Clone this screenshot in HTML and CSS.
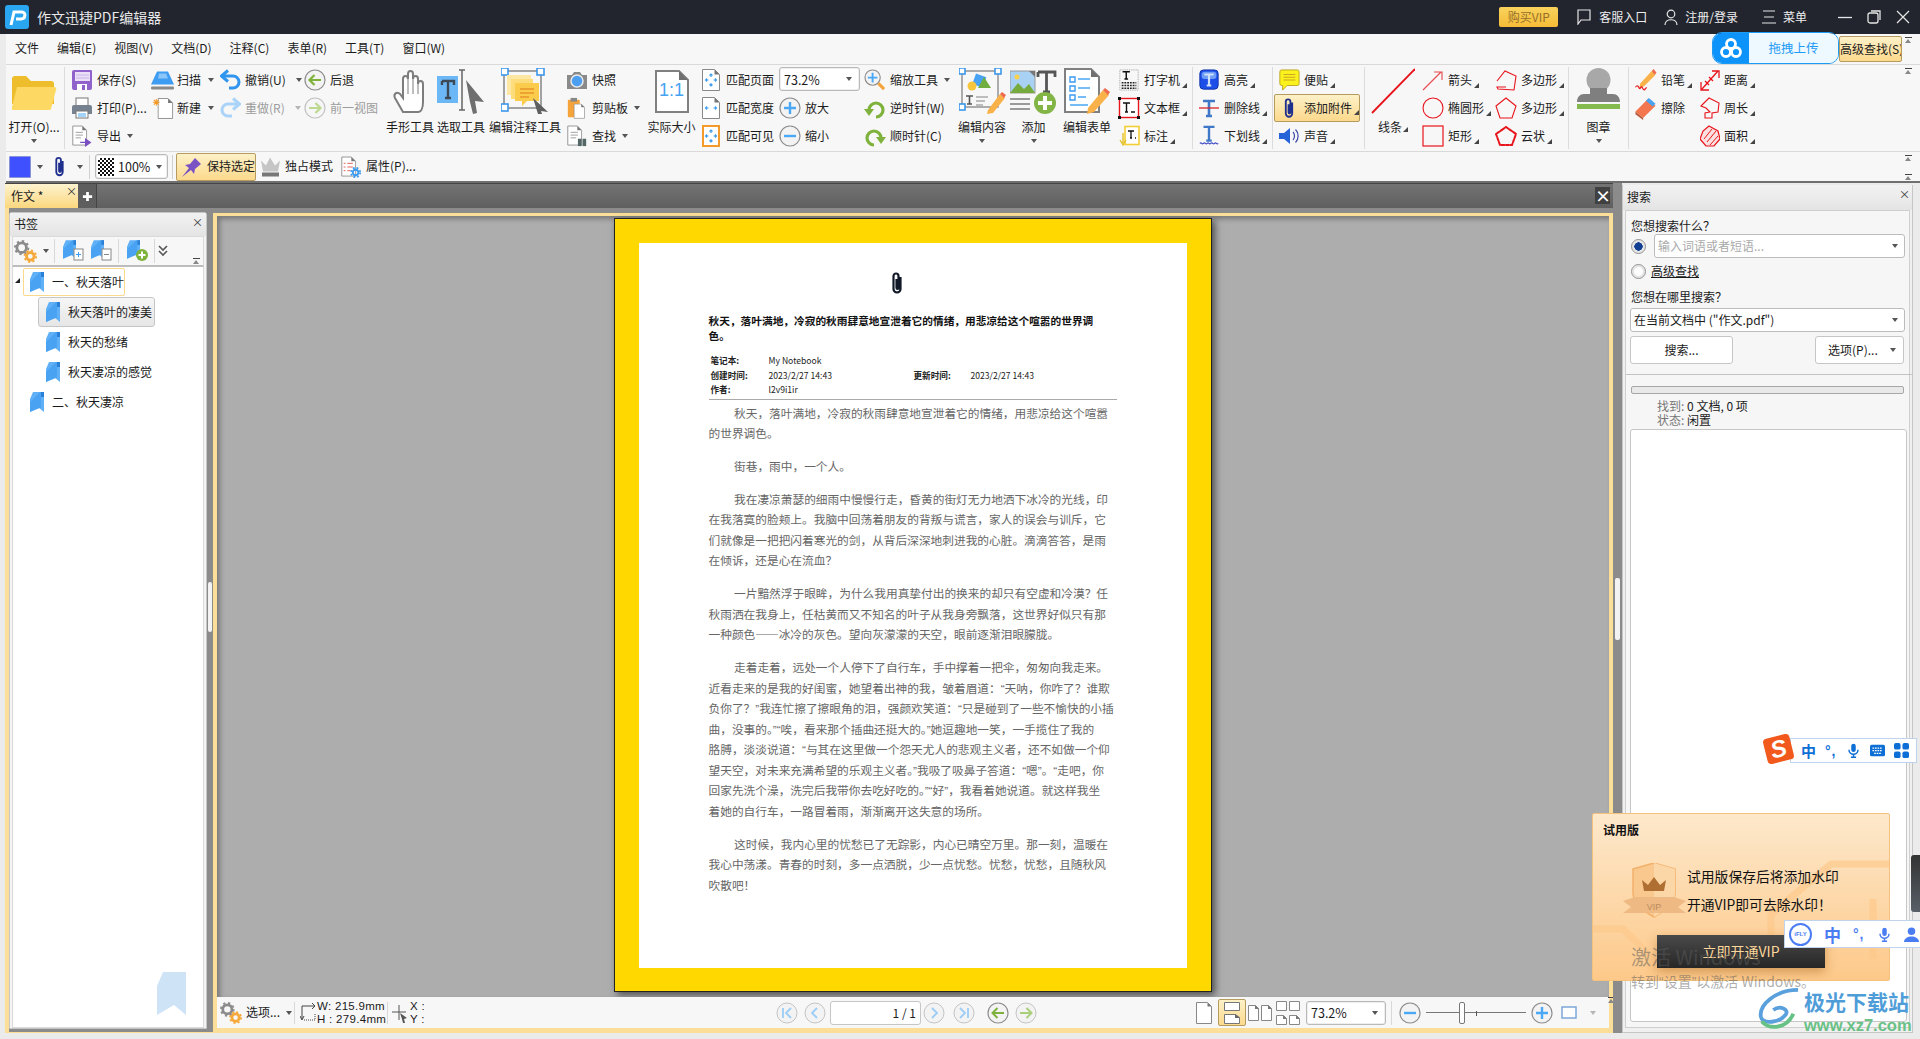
FILE: index.html
```html
<!DOCTYPE html>
<html lang="zh-CN">
<head>
<meta charset="utf-8">
<title>作文迅捷PDF编辑器</title>
<link rel="stylesheet" href="styles.css">
</head>
<body>
<svg class="defs" aria-hidden="true">
<symbol id="gear" viewBox="0 0 24 24"><circle cx="8" cy="8" r="5" fill="none" stroke="#8b8b8b" stroke-width="3"/><circle cx="8" cy="8" r="7" fill="none" stroke="#8b8b8b" stroke-width="2" stroke-dasharray="2.4 3.1"/><circle cx="17" cy="17" r="4" fill="none" stroke="#f5a93c" stroke-width="3"/><circle cx="17" cy="17" r="6" fill="none" stroke="#f5a93c" stroke-width="2" stroke-dasharray="2.2 2.5"/></symbol>
<symbol id="bm" viewBox="0 0 14 20"><path d="M3 0H14V20L8.500 15.500 0 20V7Z" fill="#5fb0f6"/><path d="M11 0h3v5h-3z" fill="#2a7fd6"/><path d="M0 20V10L10 0h1V15.500Z" fill="#4aa3f2"/></symbol>
<symbol id="clip" viewBox="0 0 12 24"><path d="M9.500 6v12a3.500 3.500 0 0 1-7 0V5a2.500 2.500 0 0 1 5 0v12a1 1 0 0 1-2 0V8" fill="none" stroke="#1e2f8e" stroke-width="2"/></symbol>
<symbol id="doc" viewBox="0 0 18 24"><path d="M1 1h11l5 5v17H1Z" fill="#fff" stroke="#8a8a8a"/><path d="M12 1v5h5Z" fill="#777"/></symbol>
<symbol id="mic" viewBox="0 0 16 20"><rect x="5" y="1" width="6" height="11" rx="3" fill="currentColor"/><path d="M2 9a6 6 0 0 0 12 0M8 15v4M4.500 19h7" fill="none" stroke="currentColor" stroke-width="2"/></symbol>
<symbol id="round" viewBox="0 0 22 22"><circle cx="11" cy="11" r="10" fill="#f3f3f3" stroke="#8d8d8d" stroke-width="1.200"/></symbol>
<symbol id="plus" viewBox="0 0 22 22"><circle cx="11" cy="11" r="10" fill="#f3f3f3" stroke="#8d8d8d" stroke-width="1.200"/><path d="M11 5v12M5 11h12" stroke="#4aa8f5" stroke-width="2.400"/></symbol>
<symbol id="minus" viewBox="0 0 22 22"><circle cx="11" cy="11" r="10" fill="#f3f3f3" stroke="#8d8d8d" stroke-width="1.200"/><path d="M5 11h12" stroke="#4aa8f5" stroke-width="2.400"/></symbol>
</svg>

<header class="titlebar">
  <svg class="logo" viewBox="0 0 24 24"><rect width="24" height="24" rx="3" fill="#2aa5f0"/><path d="M6 20 9 7h8c4 0 4 7-1 7h-5" fill="none" stroke="#fff" stroke-width="3"/></svg>
  <span class="apptitle">作文迅捷PDF编辑器</span>
  <span class="vip">购买VIP</span>
  <svg class="tb-ic a1" viewBox="0 0 14 16"><path d="M1 1h12v10H4l-3 4Z" fill="none" stroke="#e6e6e6" stroke-width="1.200"/></svg><span class="tb-t t1">客服入口</span>
  <svg class="tb-ic a2" viewBox="0 0 14 16"><circle cx="7" cy="5" r="3.800" fill="none" stroke="#e6e6e6" stroke-width="1.200"/><path d="M1 16c0-7 12-7 12 0" fill="none" stroke="#e6e6e6" stroke-width="1.200"/></svg><span class="tb-t t2">注册/登录</span>
  <svg class="tb-ic a3" viewBox="0 0 14 16"><path d="M1 2h12M2 8h10M0 14h14" stroke="#e6e6e6" stroke-width="1.200"/></svg><span class="tb-t t3">菜单</span>
  <svg class="winb w1" viewBox="0 0 14 14"><path d="M0 7.500h14" stroke="#e6e6e6" stroke-width="1.300"/></svg>
  <svg class="winb w2" viewBox="0 0 14 14"><rect x="1" y="3" width="10" height="10" rx="2" fill="none" stroke="#e6e6e6" stroke-width="1.300"/><path d="M4 1h9v9" fill="none" stroke="#e6e6e6" stroke-width="1.300"/></svg>
  <svg class="winb w3" viewBox="0 0 14 14"><path d="M1 1l12 12M13 1 1 13" stroke="#e6e6e6" stroke-width="1.200"/></svg>
</header>

<nav class="menubar"><span>文件</span><span>编辑(E)</span><span>视图(V)</span><span>文档(D)</span><span>注释(C)</span><span>表单(R)</span><span>工具(T)</span><span>窗口(W)</span><i class="scrollmk rb0"></i></nav>

<section class="ribbon">
  <div class="big open">
    <svg class="bi folder" viewBox="0 0 46 36"><path d="M1 4a3 3 0 0 1 3-3h11l5 5h20a3 3 0 0 1 3 3v20H1Z" fill="#eebd2b"/><path d="M6 12h37a2 2 0 0 1 2 3l-5 19a2 2 0 0 1-2 1H3a2 2 0 0 1-2-3Z" fill="#fdd963"/></svg>
    <span class="lb">打开(O)...</span><i class="ar"></i>
  </div>
  <i class="sep"></i>
  <div class="c save">
    <div class="r"><svg class="i22" viewBox="0 0 22 22"><path d="M1 3a2 2 0 0 1 2-2h17a1 1 0 0 1 1 1v17a2 2 0 0 1-2 2H3a2 2 0 0 1-2-2Z" fill="#8f63cb"/><rect x="4" y="3" width="15" height="9" fill="#eadff7"/><path d="M5 6h13M5 9h13" stroke="#c9b4e6"/><rect x="6" y="15" width="10" height="6" fill="#fff"/><rect x="11" y="16" width="3" height="5" fill="#8f63cb"/></svg><span>保存(S)</span></div>
    <div class="r"><svg class="i22" viewBox="0 0 22 22"><rect x="5" y="1" width="12" height="8" fill="#fff" stroke="#777"/><path d="M1 10a2 2 0 0 1 2-2h16a2 2 0 0 1 2 2v7H1Z" fill="#76828f"/><rect x="5" y="14" width="12" height="7" fill="#fff" stroke="#777"/><path d="M7 17h8M7 19h8" stroke="#4aa8f5"/></svg><span>打印(P)...</span></div>
    <div class="r"><svg class="i22" viewBox="0 0 22 24"><use href="#doc" width="17" height="23"/><path d="M4 8h8M4 11h8M4 14h6" stroke="#999"/><path d="M9 19h9M15 15.500l5 3.500-5 3.500Z" fill="#7a4fc0" stroke="#7a4fc0" stroke-width="1.500"/></svg><span>导出</span><i class="ar"></i></div>
  </div>
  <div class="c scan">
    <div class="r"><svg class="i25" viewBox="0 0 25 22"><path d="M7 2h11l6 13H1Z" fill="#3f9cf3"/><path d="M9 4h7l2 5H8Z" fill="#8cc6f8"/><rect x="1" y="17" width="23" height="3" rx="1" fill="#8a8a8a"/></svg><span>扫描</span><i class="ar"></i></div>
    <div class="r"><svg class="i25" viewBox="0 0 25 24"><use href="#doc" x="7" y="0" width="17" height="24"/><path d="M6 2v7M2.500 5.500h7M3.500 3l5 5M8.500 3l-5 5" stroke="#f59a23" stroke-width="1.100"/></svg><span>新建</span><i class="ar"></i></div>
  </div>
  <div class="c undo">
    <div class="r"><svg class="i21" viewBox="0 0 21 22"><path d="M3 7h10a5.500 5.500 0 0 1 0 12H9" fill="none" stroke="#2f95ee" stroke-width="3"/><path d="M8 1.500 1.500 7 8 12.500" fill="none" stroke="#2f95ee" stroke-width="3"/></svg><span>撤销(U)</span><i class="ar"></i></div>
    <div class="r dim"><svg class="i21" viewBox="0 0 21 22"><path d="M18 7H8a5.500 5.500 0 0 0 0 12h4" fill="none" stroke="#a9d4f8" stroke-width="3"/><path d="M13 1.500 19.500 7 13 12.500" fill="none" stroke="#a9d4f8" stroke-width="3"/></svg><span>重做(R)</span><i class="ar lt"></i></div>
  </div>
  <div class="c back">
    <div class="r"><svg class="i22" viewBox="0 0 22 22"><use href="#round"/><path d="M17 11H6M10.500 6 5.500 11l5 5" fill="none" stroke="#7fb23c" stroke-width="2.200"/></svg><span>后退</span></div>
    <div class="r dim"><svg class="i22" viewBox="0 0 22 22"><circle cx="11" cy="11" r="10" fill="#f6f6f6" stroke="#c2c2c2" stroke-width="1.200"/><path d="M5 11h11M11.500 6l5 5-5 5" fill="none" stroke="#bcd98f" stroke-width="2.200"/></svg><span>前一视图</span></div>
  </div>
  <div class="big hand">
    <svg class="bi h-ic" viewBox="0 0 36 48"><path d="M11 44 3 30c-2-4 2-7 5-4l3 4V11c0-4 5-4 5 0V6c0-4 5-4 5 0v5c0-4 5-4 5 0v5c0-4 5-4 5 0v18c0 6-2 10-5 10Z" fill="#fff" stroke="#7d7d7d" stroke-width="2"/><path d="M16 11v15M21 11v15M26 14v12" stroke="#7d7d7d"/></svg>
    <span class="lb">手形工具</span>
  </div>
  <div class="big sel">
    <svg class="bi s-ic" viewBox="0 0 48 46"><rect x="0" y="8" width="21" height="27" fill="#6cb8f6"/><path d="M5 13h12v4M11 13v17M8 30h6M5 13v4" fill="none" stroke="#3d4a55" stroke-width="2.400"/><path d="M22 2h6M25 2v40M22 42h6" fill="none" stroke="#666" stroke-width="1.500"/><path d="M29 12 47 34 38 33 40 45 36 46 33 34Z" fill="#6f6f6f"/></svg>
    <span class="lb">选取工具</span>
  </div>
  <div class="big nt">
    <svg class="bi n-ic" viewBox="0 0 48 46"><rect x="3" y="3" width="37" height="37" fill="none" stroke="#8c8c8c" stroke-width="1.600"/><rect x="0" y="0" width="7" height="7" fill="#fff" stroke="#3a97ea" stroke-width="1.600"/><rect x="36" y="0" width="7" height="7" fill="#fff" stroke="#3a97ea" stroke-width="1.600"/><rect x="0" y="36" width="7" height="7" fill="#fff" stroke="#3a97ea" stroke-width="1.600"/><rect x="6" y="7" width="24" height="20" fill="#fde7a3"/><rect x="10" y="11" width="22" height="20" fill="#fddc7c"/><path d="M14 15h24v18H26l-5 5v-5h-7Z" fill="#fbcb4b"/><path d="M19 21h14M19 25h14M19 29h9" stroke="#e8972b" stroke-width="1.300"/><path d="M32 30 47 44 40 43 41 46 37 46Z" fill="#5f5f5f"/></svg>
    <span class="lb">编辑注释工具</span>
  </div>
  <div class="c snap">
    <div class="r"><svg class="i22" viewBox="0 0 22 22"><path d="M1 6h5l2-3h6l2 3h5v14H1Z" fill="#8a8a8a"/><circle cx="11" cy="12" r="6" fill="#4c9ff0" stroke="#e9e9e9" stroke-width="1.500"/></svg><span>快照</span></div>
    <div class="r"><svg class="i22" viewBox="0 0 22 24"><rect x="1" y="3" width="13" height="19" rx="1" fill="#f5a33b"/><rect x="4" y="1" width="7" height="4" fill="#888"/><use href="#doc" x="7" y="7" width="13" height="17"/></svg><span>剪贴板</span><i class="ar"></i></div>
    <div class="r"><svg class="i22" viewBox="0 0 22 24"><use href="#doc" width="17" height="23"/><path d="M4 8h8M4 11h8M4 14h6" stroke="#999"/><rect x="12" y="15" width="4" height="8" fill="#566"/><rect x="17" y="15" width="4" height="8" fill="#566"/></svg><span>查找</span><i class="ar"></i></div>
  </div>
  <div class="big actual">
    <svg class="bi a-ic" viewBox="0 0 34 44"><path d="M1 2h23l9 9v32H1Z" fill="#fff" stroke="#808080" stroke-width="2"/><path d="M24 2v9h9Z" fill="#707070"/></svg>
    <span class="one">1:1</span>
    <span class="lb">实际大小</span>
  </div>
  <div class="c match">
    <div class="r"><svg class="i18" viewBox="0 0 18 22"><path d="M.500.500h12l5 5v16H.500Z" fill="#fff" stroke="#888"/><path d="M12.500.500v5h5Z" fill="#777"/><path d="M9 5v3M9 14v3M4 11h2.500M11.500 11H14M7.500 6.500 9 5l1.500 1.500M7.500 15.500 9 17l1.500-1.500M5 9.500 3.500 11 5 12.500M13 9.500l1.500 1.500-1.500 1.500" fill="none" stroke="#3b9cf0" stroke-width="1.100"/></svg><span>匹配页面</span></div>
    <div class="r"><svg class="i18" viewBox="0 0 18 22"><path d="M.500.500h12l5 5v16H.500Z" fill="#fff" stroke="#888"/><path d="M12.500.500v5h5Z" fill="#777"/><path d="M4 11h2.500M11.500 11H14M5 9.500 3.500 11 5 12.500M13 9.500l1.500 1.500-1.500 1.500" fill="none" stroke="#3b9cf0" stroke-width="1.100"/></svg><span>匹配宽度</span></div>
    <div class="r"><svg class="i18" viewBox="0 0 18 22"><rect x="1" y="1" width="16" height="20" fill="#fff" stroke="#f39a2b" stroke-width="2"/><path d="M9 5v3M9 14v3M4 11h2.500M11.500 11H14M7.500 6.500 9 5l1.500 1.500M7.500 15.500 9 17l1.500-1.500M5 9.500 3.500 11 5 12.500M13 9.500l1.500 1.500-1.500 1.500" fill="none" stroke="#3b9cf0" stroke-width="1.100"/></svg><span>匹配可见</span></div>
  </div>
  <div class="c zoomc">
    <div class="r"><div class="combo z1"><span>73.2%</span><i class="ar"></i></div></div>
    <div class="r"><svg class="i22" viewBox="0 0 22 22"><use href="#plus"/></svg><span>放大</span></div>
    <div class="r"><svg class="i22" viewBox="0 0 22 22"><use href="#minus"/></svg><span>缩小</span></div>
  </div>
  <div class="c ztool">
    <div class="r"><svg class="i22" viewBox="0 0 23 23"><circle cx="9" cy="9" r="8" fill="#f3f3f3" stroke="#8d8d8d" stroke-width="1.200"/><path d="M9 4v10M4 9h10" stroke="#4aa8f5" stroke-width="2"/><path d="M15 15l6 6" stroke="#f5a33b" stroke-width="3.200"/></svg><span>缩放工具</span><i class="ar"></i></div>
    <div class="r"><svg class="i22" viewBox="0 0 22 22"><path d="M5 13a7 7 0 1 1 7 7" fill="none" stroke="#7fb23c" stroke-width="3.200"/><path d="M0 12h10L5 19Z" fill="#7fb23c"/></svg><span>逆时针(W)</span></div>
    <div class="r"><svg class="i22" viewBox="0 0 22 22"><path d="M17 13a7 7 0 1 0-7 7" fill="none" stroke="#7fb23c" stroke-width="3.200"/><path d="M22 12H12l5 7Z" fill="#7fb23c"/></svg><span>顺时针(C)</span></div>
  </div>
  <div class="big edit">
    <svg class="bi e-ic" viewBox="0 0 47 46"><rect x="3" y="3" width="36" height="36" fill="none" stroke="#8c8c8c" stroke-width="1.400"/><rect x="0" y="0" width="6" height="6" fill="#fff" stroke="#3a97ea" stroke-width="1.600"/><rect x="36" y="0" width="6" height="6" fill="#fff" stroke="#3a97ea" stroke-width="1.600"/><rect x="0" y="36" width="6" height="6" fill="#fff" stroke="#3a97ea" stroke-width="1.600"/><rect x="15" y="7" width="11" height="11" fill="#4aa3f2" transform="rotate(20 20 12)"/><path d="M19 20 25 9l7 11Z" fill="#6fae3f"/><circle cx="13" cy="18" r="4.500" fill="#f8c63c"/><path d="M7 28h7M10.500 28v8M8 36h5" stroke="#555" stroke-width="1.600" fill="none"/><path d="M17 29h12M17 33h9M17 37h7" stroke="#aaa" stroke-width="1.300"/><path d="M29 42l12-16 5 4-12 15-6 1Z" fill="#f9b14a"/><path d="M41 26l2-2 4 3-2 3Z" fill="#ee6b4e"/></svg>
    <span class="lb">编辑内容</span><i class="ar"></i>
  </div>
  <div class="big add">
    <svg class="bi add-ic" viewBox="0 0 47 46"><rect x="0" y="3" width="25" height="22" fill="#a9d1f4" stroke="#999"/><path d="M0 25l8-10 6 6 5-5 6 9Z" fill="#78ab3e"/><circle cx="7" cy="9" r="2.500" fill="#f9d14d"/><path d="M19 3h6v6Z" fill="#777"/><path d="M28 4h17v5M36.500 4v20M33 24h7M28 4v5" fill="none" stroke="#555" stroke-width="2.800"/><path d="M0 31h20M0 36h20M0 41h20" stroke="#9a9a9a" stroke-width="1.800"/><circle cx="35" cy="35" r="11" fill="#82b446"/><path d="M35 28v14M28 35h14" stroke="#fff" stroke-width="4"/></svg>
    <span class="lb">添加</span><i class="ar"></i>
  </div>
  <div class="big form">
    <svg class="bi f-ic" viewBox="0 0 47 46"><path d="M1 1h26l8 8v35H1Z" fill="#fff" stroke="#808080" stroke-width="2"/><path d="M27 1v8h8Z" fill="#707070"/><path d="M6 9h5v5H6zM6 18h5v5H6zM6 27h5v5H6z" fill="none" stroke="#3d9bf0" stroke-width="1.400"/><path d="M14 11h12M14 20h12M14 29h8M6 37h18" stroke="#4aa8f5" stroke-width="1.600"/><path d="M24 40l15-18 6 5-15 17-7 2Z" fill="#f9b14a"/><path d="M39 22l2-2 5 4-2 3Z" fill="#ee6b4e"/></svg>
    <span class="lb">编辑表单</span>
  </div>
  <div class="c type">
    <div class="r"><svg class="i22" viewBox="0 0 22 24"><rect x="1" y="1" width="20" height="22" fill="none" stroke="#999" stroke-dasharray="1 1"/><path d="M4 3h8M8 3v8M6 11h4" stroke="#111" stroke-width="1.600" fill="none"/><path d="M3 15h16M3 18h16M3 21h16" stroke="#222" stroke-width="1.800" stroke-dasharray="2 1"/></svg><span>打字机</span><i class="cn"></i></div>
    <div class="r"><svg class="i22" viewBox="0 0 22 22"><rect x="1.500" y="1.500" width="19" height="19" fill="#fff" stroke="#e8141c" stroke-width="1.400"/><path d="M5 6h7M8.500 6v9M7 15h3M13 15h4" stroke="#111" stroke-width="1.400" fill="none"/><path d="M0 0h3v3H0zM19 0h3v3h-3zM0 19h3v3H0zM19 19h3v3h-3z" fill="#111"/></svg><span>文本框</span><i class="cn"></i></div>
    <div class="r"><svg class="i22" viewBox="0 0 22 22"><rect x="7" y="1.500" width="14" height="18" fill="#fff" stroke="#f3cf35" stroke-width="1.600"/><path d="M10 6h6M13 6v7M12 13h2M17 13h1" stroke="#111" stroke-width="1.300" fill="none"/><path d="M5 8v10M2 15l3 5 3-5" fill="none" stroke="#e3c12b" stroke-width="1.400"/></svg><span>标注</span><i class="cn"></i></div>
  </div>
  <i class="sep"></i>
  <div class="c hl">
    <div class="r"><svg class="i22" viewBox="0 0 22 24"><rect x="1" y="1" width="20" height="21" rx="4" fill="#1d4fe8" stroke="#0c2fa8"/><rect x="3" y="3" width="16" height="8" rx="3" fill="#6d9df7"/><path d="M6 6h10M11 6v12M8.500 18h5" fill="none" stroke="#cfe0f8" stroke-width="2.400"/></svg><span>高亮</span><i class="cn"></i></div>
    <div class="r"><svg class="i22" viewBox="0 0 22 22"><path d="M5 4h12M11 4v15M8 19h6" fill="none" stroke="#3f78c9" stroke-width="2.600"/><path d="M1 11h20" stroke="#d8242a" stroke-width="1.300"/></svg><span>删除线</span><i class="cn"></i></div>
    <div class="r"><svg class="i22" viewBox="0 0 22 24"><path d="M5 2h12M11 2v15M8 17h6" fill="none" stroke="#3f78c9" stroke-width="2.600"/><path d="M1 20c2-2 2 2 4 0s2 2 4 0 2 2 4 0 2 2 4 0 2 2 4 0" fill="none" stroke="#3b48c6" stroke-width="1.300"/></svg><span>下划线</span><i class="cn"></i></div>
  </div>
  <i class="sep"></i>
  <div class="c stick">
    <div class="r"><svg class="i22" viewBox="0 0 22 24"><path d="M1 3a2 2 0 0 1 2-2h17a2 2 0 0 1 2 2v13a2 2 0 0 1-2 2H9l-5 5v-5H3a2 2 0 0 1-2-2Z" fill="#fbf11d" stroke="#b9a420"/><path d="M5 6h13M5 9h13M5 12h13" stroke="#c7a020"/></svg><span>便贴</span><i class="cn"></i></div>
    <div class="r on"><svg class="i22" viewBox="0 0 12 24"><use href="#clip"/></svg><span>添加附件</span><i class="cn"></i></div>
    <div class="r"><svg class="i22" viewBox="0 0 22 22"><path d="M1 8h5l6-5v16l-6-5H1Z" fill="#2563d8"/><path d="M15 7c2 2 2 6 0 8M17.500 4.500c3.500 3.500 3.500 9.500 0 13" fill="none" stroke="#3c4aa8" stroke-width="1.200"/></svg><span>声音</span><i class="cn"></i></div>
  </div>
  <i class="sep"></i>
  <div class="big line">
    <svg class="bi l-ic" viewBox="0 0 44 46"><path d="M1 45 44 1" stroke="#e8141c" stroke-width="1.800"/></svg>
    <span class="lb">线条<i class="cn"></i></span>
  </div>
  <div class="c arrow">
    <div class="r"><svg class="i22" viewBox="0 0 22 22"><path d="M1 21 19 3M12 3h8v8" fill="none" stroke="#e84a4f" stroke-width="1.100"/></svg><span>箭头</span><i class="cn"></i></div>
    <div class="r"><svg class="i22" viewBox="0 0 22 22"><circle cx="11" cy="11" r="10" fill="none" stroke="#e8141c" stroke-width="1.100"/></svg><span>椭圆形</span><i class="cn"></i></div>
    <div class="r"><svg class="i22" viewBox="0 0 22 22"><rect x="1" y="1" width="20" height="20" fill="none" stroke="#e8141c" stroke-width="1.200"/></svg><span>矩形</span><i class="cn"></i></div>
  </div>
  <div class="c poly">
    <div class="r"><svg class="i22" viewBox="0 0 22 22"><path d="M2 12 10 2l11 5-2 14-16-1-1-2h9" fill="none" stroke="#e8141c" stroke-width="1.100"/></svg><span>多边形</span><i class="cn"></i></div>
    <div class="r"><svg class="i22" viewBox="0 0 22 22"><path d="M11 1 21 9l-4 12H5L1 9Z" fill="none" stroke="#e8141c" stroke-width="1.100"/></svg><span>多边形</span><i class="cn"></i></div>
    <div class="r"><svg class="i22" viewBox="0 0 22 22"><path d="M11 2 21 9l-4 11H5L1 9Z" fill="none" stroke="#e8141c" stroke-width="2" stroke-dasharray="3 1.500" stroke-linecap="round"/></svg><span>云状</span><i class="cn"></i></div>
  </div>
  <i class="sep"></i>
  <div class="big stamp">
    <svg class="bi st-ic" viewBox="0 0 45 46"><circle cx="22.500" cy="12" r="12" fill="#a8a8a8"/><path d="M14 20h17v6h6c4 0 7 3 7 8H1c0-5 3-8 7-8h6Z" fill="#7f7f7f"/><rect x="1" y="36" width="43" height="5" fill="#84b94e"/></svg>
    <span class="lb">图章</span><i class="ar"></i>
  </div>
  <i class="sep"></i>
  <div class="c pen">
    <div class="r"><svg class="i23" viewBox="0 0 23 24"><path d="M6 15 18 2l4 4-12 12-5 2Z" fill="#f9b14a"/><path d="M18 2l2-2 3 4-2 2Z" fill="#ee6b4e"/><path d="M1 19c2-3 3-1 4 1s2-3 3-1 2 4 3 2 2-1 2-1" fill="none" stroke="#e8141c" stroke-width="1.200"/></svg><span>铅笔</span><i class="cn"></i></div>
    <div class="r"><svg class="i23" viewBox="0 0 23 24"><path d="M1 15 14 2l8 7-13 13Z" fill="#f4764f"/><path d="M12 4 15 1l7 6-3 3Z" fill="#4aa3f2"/><path d="M1 15v3l8 6v-2Z" fill="#b75b3d"/></svg><span>擦除</span></div>
  </div>
  <div class="c dist">
    <div class="r"><svg class="i20" viewBox="0 0 20 22"><path d="M2 20 18 2M12 2h7v7M1 13v8h8M5 12l4 4M9 8l4 4" fill="none" stroke="#e8141c" stroke-width="1.300"/></svg><span>距离</span><i class="cn"></i></div>
    <div class="r"><svg class="i20" viewBox="0 0 20 22"><path d="M1 9 9 1l10 5-1 9-6 1v5H5v-5l5-1-4-4Z" fill="none" stroke="#e8141c" stroke-width="1.100"/></svg><span>周长</span><i class="cn"></i></div>
    <div class="r"><svg class="i20" viewBox="0 0 20 22"><path d="M9 1l9 5 2 8-6 7H6l-6-7 3-8Z" fill="#fbe0e0" stroke="#e8141c" stroke-width="1.200"/><path d="M4 14l8-10M7 17l9-11M10 20l8-9" stroke="#e8141c"/></svg><span>面积</span><i class="cn"></i></div>
  </div>
  <i class="scrollmk rb"></i>
</section>

<section class="toolbar">
  <i class="swatch"></i><i class="ar m6"></i>
  <svg class="tclip" viewBox="0 0 12 24"><use href="#clip"/></svg><i class="ar m12"></i>
  <i class="tsep s1"></i>
  <div class="combo z2"><i class="chk"></i><span>100%</span><i class="ar"></i></div>
  <i class="tsep s2"></i>
  <div class="btn-on keep"><svg class="i22" viewBox="0 0 22 22"><path d="M1 21 8 12 4 9l5-1 5-6 6 6-6 5-1 5-3-4Z" fill="#7b52c4"/></svg><span>保持选定</span></div>
  <div class="tool solo"><svg class="i23" viewBox="0 0 23 22"><path d="M2 5l5 5 4-8 5 8 5-5-2 11H4Z" fill="#c5c5c5"/><rect x="3" y="17" width="17" height="4" fill="#777"/></svg><span>独占模式</span></div>
  <div class="tool prop"><svg class="i22" viewBox="0 0 22 24"><use href="#doc" width="17" height="23"/><path d="M3 8h2M7 8h6M3 12h2M7 12h6M3 16h2M7 16h3" stroke="#e0584a"/><circle cx="16" cy="18" r="3" fill="none" stroke="#3d9bf0" stroke-width="2"/><circle cx="16" cy="18" r="5" fill="none" stroke="#3d9bf0" stroke-width="2" stroke-dasharray="2 2"/></svg><span>属性(P)...</span></div>
  <i class="scrollmk rb1"></i><i class="scrollmk rb2"></i>
</section>

<main class="main">
  <div class="leftcol">
    <div class="tabs">
      <div class="tab"><span>作文 *</span><b class="x">×</b></div>
      <div class="newtab"><svg viewBox="0 0 12 12"><path d="M6 1v10M1 6h10" stroke="#fff" stroke-width="3"/></svg></div>
      <div class="tabclose">×</div>
    </div>
    <div class="docarea">
      <aside class="bookmarks">
        <div class="phead"><span>书签</span><b class="x">×</b></div>
        <div class="ptools">
          <svg class="i23" viewBox="0 0 24 24"><use href="#gear"/></svg><i class="ar"></i><i class="psep m5"></i>
          <svg class="i22 m8" viewBox="0 0 22 22"><use href="#bm" width="13" height="19"/><rect x="11" y="9" width="9" height="11" fill="#fff" stroke="#888"/><path d="M13 14.500h5M15.500 12v5" stroke="#3d9bf0"/></svg>
          <svg class="i22 m6" viewBox="0 0 22 22"><use href="#bm" width="13" height="19"/><rect x="11" y="9" width="9" height="11" fill="#fff" stroke="#888"/><path d="M13 14.500h5" stroke="#888"/></svg>
          <i class="psep m5"></i>
          <svg class="i22 m8" viewBox="0 0 22 22"><use href="#bm" width="13" height="19"/><circle cx="15" cy="15" r="6" fill="#7fb23c"/><path d="M15 11.500v7M11.500 15h7" stroke="#fff" stroke-width="2"/></svg>
          <i class="psep m5"></i>
          <svg class="chev" viewBox="0 0 10 12"><path d="M1 1l4 4 4-4M1 6l4 4 4-4" fill="none" stroke="#555" stroke-width="1.600"/></svg>
          <i class="scrollmk rb3"></i>
        </div>
        <div class="tree">
          <div class="node l1 focus"><i class="tw"></i><svg class="bmk" viewBox="0 0 14 20"><use href="#bm"/></svg><span>一、秋天落叶</span></div>
          <div class="node l2 cur"><svg class="bmk" viewBox="0 0 14 20"><use href="#bm"/></svg><span>秋天落叶的凄美</span></div>
          <div class="node l2"><svg class="bmk" viewBox="0 0 14 20"><use href="#bm"/></svg><span>秋天的愁绪</span></div>
          <div class="node l2"><svg class="bmk" viewBox="0 0 14 20"><use href="#bm"/></svg><span>秋天凄凉的感觉</span></div>
          <div class="node l1"><svg class="bmk" viewBox="0 0 14 20"><use href="#bm"/></svg><span>二、秋天凄凉</span></div>
          <svg class="ghost" viewBox="0 0 29 43"><path d="M6 0H29V43L17 33 0 43V14Z" fill="#cfe3f7"/></svg>
        </div>
      </aside>
      <div class="gutter"><i class="grip"></i></div>
      <section class="viewer">
        <div class="canvas">
          <article class="page">
            <div class="sheet">
              <svg class="pclip" viewBox="0 0 12 24"><path d="M9.500 6v12a3.500 3.500 0 0 1-7 0V5a2.500 2.500 0 0 1 5 0v12a1 1 0 0 1-2 0V8" fill="none" stroke="#101828" stroke-width="2.200"/></svg>
              <h1>秋天，落叶满地，冷寂的秋雨肆意地宣泄着它的情绪，用悲凉给这个喧嚣的世界调<br>色。</h1>
              <div class="meta">
                <b>笔记本:</b><span>My Notebook</span><b></b><span></span>
                <b>创建时间:</b><span>2023/2/27 14:43</span><b>更新时间:</b><span>2023/2/27 14:43</span>
                <b>作者:</b><span>l2v9i1ir</span><b></b><span></span>
              </div>
              <p class="ind">秋天，落叶满地，冷寂的秋雨肆意地宣泄着它的情绪，用悲凉给这个喧嚣<br>的世界调色。</p>
              <p class="ind">街巷，雨中，一个人。</p>
              <p class="ind">我在凄凉萧瑟的细雨中慢慢行走，昏黄的街灯无力地洒下冰冷的光线，印<br>在我落寞的脸颊上。我脑中回荡着朋友的背叛与谎言，家人的误会与训斥，它<br>们就像是一把把闪着寒光的剑，从背后深深地刺进我的心脏。滴滴答答，是雨<br>在倾诉，还是心在流血？</p>
              <p class="ind">一片黯然浮于眼眸，为什么我用真挚付出的换来的却只有空虚和冷漠？任<br>秋雨洒在我身上，任枯黄而又不知名的叶子从我身旁飘落，这世界好似只有那<br>一种颜色——冰冷的灰色。望向灰濛濛的天空，眼前逐渐泪眼朦胧。</p>
              <p class="ind">走着走着，远处一个人停下了自行车，手中撑着一把伞，匆匆向我走来。<br>近看走来的是我的好闺蜜，她望着出神的我，皱着眉道：<span class="qm">“</span>天呐，你咋了？谁欺<br>负你了？<span class="qm">”</span>我连忙擦了擦眼角的泪，强颜欢笑道：<span class="qm">“</span>只是碰到了一些不愉快的小插<br>曲，没事的。<span class="qm">”“</span>唉，看来那个插曲还挺大的。<span class="qm">”</span>她逗趣地一笑，一手揽住了我的<br>胳膊，淡淡说道：<span class="qm">“</span>与其在这里做一个怨天尤人的悲观主义者，还不如做一个仰<br>望天空，对未来充满希望的乐观主义者。<span class="qm">”</span>我吸了吸鼻子答道：<span class="qm">“</span>嗯<span class="qm">”</span>。<span class="qm">“</span>走吧，你<br>回家先洗个澡，洗完后我带你去吃好吃的。<span class="qm">”“</span>好<span class="qm">”</span>，我看着她说道。就这样我坐<br>着她的自行车，一路冒着雨，渐渐离开这失意的场所。</p>
              <p class="ind">这时候，我内心里的忧愁已了无踪影，内心已晴空万里。那一刻，温暖在<br>我心中荡漾。青春的时刻，多一点洒脱，少一点忧愁。忧愁，忧愁，且随秋风<br>吹散吧！</p>
            </div>
          </article>
        </div>
        <footer class="status">
          <div class="st-left">
            <svg class="i22 m3" viewBox="0 0 24 24"><use href="#gear"/></svg><span class="m4">选项...</span><i class="ar m6"></i><i class="psep m2"></i>
            <svg class="dim-ic" viewBox="0 0 16 22"><path d="M15 4H2v13M0 14l2 4 2-4M12 1l3 3-3 3" fill="none" stroke="#444"/><path d="M4 18h11v-7" fill="none" stroke="#444" stroke-dasharray="1 1"/></svg>
            <div class="wh"><span>W: 215.9mm</span><span>H : 279.4mm</span></div>
            <i class="psep m4"></i>
            <svg class="cross" viewBox="0 0 16 20"><path d="M7 2v15M0 9h14" stroke="#555"/><path d="M8 10l7 5-3 1 1 4-2 0-1-4Z" fill="#555"/></svg>
            <div class="xy"><span>X :</span><span>Y :</span></div>
          </div>
          <div class="st-nav">
            <svg class="navb" viewBox="0 0 22 22"><circle cx="11" cy="11" r="10" fill="#f3f3f3" stroke="#c4c4c4"/><path d="M7 6v10M15 6l-5 5 5 5" fill="none" stroke="#9ccdf6" stroke-width="1.800"/></svg>
            <svg class="navb m6" viewBox="0 0 22 22"><circle cx="11" cy="11" r="10" fill="#f3f3f3" stroke="#c4c4c4"/><path d="M13 6l-5 5 5 5" fill="none" stroke="#9ccdf6" stroke-width="1.800"/></svg>
            <div class="pageno m4">1 / 1</div>
            <svg class="navb m2" viewBox="0 0 22 22"><circle cx="11" cy="11" r="10" fill="#f3f3f3" stroke="#c4c4c4"/><path d="M9 6l5 5-5 5" fill="none" stroke="#9ccdf6" stroke-width="1.800"/></svg>
            <svg class="navb m8" viewBox="0 0 22 22"><circle cx="11" cy="11" r="10" fill="#f3f3f3" stroke="#c4c4c4"/><path d="M15 6v10M7 6l5 5-5 5" fill="none" stroke="#9ccdf6" stroke-width="1.800"/></svg>
            <svg class="navb m12" viewBox="0 0 22 22"><use href="#round"/><path d="M17 11H6M10.500 6 5.500 11l5 5" fill="none" stroke="#7fb23c" stroke-width="2"/></svg>
            <svg class="navb m6" viewBox="0 0 22 22"><circle cx="11" cy="11" r="10" fill="#f3f3f3" stroke="#c4c4c4"/><path d="M5 11h11M11.500 6l5 5-5 5" fill="none" stroke="#a9cf7a" stroke-width="2"/></svg>
          </div>
          <div class="st-view">
            <svg class="pg1" viewBox="0 0 16 22"><path d="M.500.500h11l4 4v17H.500Z" fill="#fff" stroke="#888"/><path d="M11.500.500v4h4Z" fill="#777"/></svg>
            <div class="pgbtn m6"><svg viewBox="0 0 16 22"><path d="M.500.500h15v8H.500zM.500 12.500h11l4 3v6H.500Z" fill="#fff" stroke="#777"/><path d="M11 12l5 4h-5Z" fill="#666"/></svg></div>
            <svg class="pg2 m2" viewBox="0 0 24 16"><path d="M.500.500h7l3 3v12H.500zM13.500.500h7l3 3v12H13.500z" fill="#fff" stroke="#888"/><path d="M7 0l4 4H7zM20 0l4 4h-4z" fill="#777"/></svg>
            <svg class="pg2 m4" viewBox="0 0 24 24"><path d="M.500.500h10v9H.500zM13.500.500h10v9H13.500zM.500 14.500h7l3 3v6H.500zM13.500 14.500h7l3 3v6H13.500z" fill="#fff" stroke="#888"/><path d="M7 14l4 4H7zM20 14l4 4h-4z" fill="#777"/></svg>
            <div class="combo z3 m6"><span>73.2%</span><i class="ar"></i></div>
            <i class="psep m5"></i>
            <svg class="navb m7" viewBox="0 0 22 22"><use href="#minus"/></svg>
            <div class="slider m5"><i class="tick"></i><i class="thumb"></i></div>
            <svg class="navb m5" viewBox="0 0 22 22"><use href="#plus"/></svg>
            <svg class="screen m8" viewBox="0 0 16 13"><rect x="1" y="1" width="14" height="11" fill="#fdfdfd" stroke="#7ea7d8" stroke-width="1.500"/></svg>
            <i class="ar lt m13"></i>
            <i class="scrollmk rb4"></i>
          </div>
        </footer>
      </section>
    </div>
  </div>
  <div class="gutter2"><i class="grip"></i></div>
  <aside class="search">
    <div class="phead"><span>搜索</span><b class="x">×</b></div>
    <div class="sbody">
      <label class="q">您想搜索什么？</label>
      <div class="srow"><i class="radio on1"></i><div class="field fl1"><span>输入词语或者短语...</span><i class="ar"></i></div></div>
      <div class="srow adv"><i class="radio"></i><u>高级查找</u></div>
      <label class="q q2">您想在哪里搜索？</label>
      <div class="field fl2"><span>在当前文档中 ("作文.pdf")</span><i class="ar"></i></div>
      <div class="btns"><div class="sbtn b1">搜索...</div><div class="sbtn b2"><span>选项(P)...</span><i class="ar"></i></div></div>
      <hr class="rule">
      <div class="progress"></div>
      <div class="found"><span><em>找到:</em> 0 文档, 0 项</span><span><em>状态:</em> 闲置</span></div>
      <div class="results"></div>
    </div>
  </aside>
</main>

<div class="upload">
  <div class="up-l"><svg viewBox="0 0 22 20"><circle cx="11" cy="6" r="4.500" fill="none" stroke="#fff" stroke-width="2.800"/><circle cx="6" cy="14" r="4.500" fill="none" stroke="#fff" stroke-width="2.800"/><circle cx="16" cy="14" r="4.500" fill="none" stroke="#fff" stroke-width="2.800"/></svg></div>
  <div class="up-r">拖拽上传</div>
</div>
<div class="advbtn">高级查找(S)</div>

<div class="popup">
  <svg class="deco" viewBox="0 0 298 168"><path d="M0 115h30l28 28v25M298 50h-60l-60 50v68M280 85v60" fill="none" stroke="#fcc98c" stroke-width="7" opacity=".7"/></svg>
  <b class="ptitle">试用版</b>
  <div class="pbody">
    <svg class="shield" viewBox="0 0 63 56"><path d="M10 6 31 0l21 6v24c0 10-10 18-21 24C20 48 10 40 10 30Z" fill="#f9c88f" stroke="#f3b06a" stroke-width="1.500"/><path d="M31 0l21 6v24c0 10-10 18-21 24Z" fill="#fbd6a6"/><path d="M21 28l-2-11 6 5 6-8 6 8 6-5-2 11Z" fill="#b06f32"/><path d="M0 38l12-4h39l12 4-8 6 8 6H0l8-6Z" fill="#efb984"/><text x="31" y="47" class="viptxt">VIP</text></svg>
    <div class="ptext"><span>试用版保存后将添加水印</span><span>开通VIP即可去除水印！</span></div>
  </div>
  <div class="pbtn">立即开通VIP</div>
</div>

<div class="ime sogou">
  <span class="ime-z">中</span><span class="ime-p">°,</span>
  <svg class="ime-i" viewBox="0 0 16 20"><use href="#mic"/></svg>
  <svg class="ime-i" viewBox="0 0 18 14"><rect width="18" height="14" rx="2" fill="currentColor"/><path d="M3 4h12M3 7h12M5 10.500h8" stroke="#fff" stroke-width="1.500" stroke-dasharray="2 1"/></svg>
  <svg class="ime-i" viewBox="0 0 16 16"><rect width="7" height="7" rx="2" fill="currentColor"/><rect x="9" width="7" height="7" rx="2" fill="currentColor"/><rect y="9" width="7" height="7" rx="2" fill="currentColor"/><rect x="9" y="9" width="7" height="7" rx="2" fill="currentColor"/></svg>
</div>
<div class="slogo">S</div>
<div class="ime ifly">
  <span class="fly">iFLY</span><span class="ime-z">中</span><span class="ime-p">°,</span>
  <svg class="ime-i" viewBox="0 0 16 20"><use href="#mic"/></svg>
  <svg class="ime-i" viewBox="0 0 16 16"><circle cx="8" cy="4.500" r="4" fill="currentColor"/><path d="M0 16c0-8 16-8 16 0Z" fill="currentColor"/></svg>
</div>
<div class="sidewidget"></div>
<div class="winmark"><span class="w-a">激活 Windows</span><span class="w-b">转到<span class="qm">“</span>设置<span class="qm">”</span>以激活 Windows。</span></div>
<div class="sitemark">
  <svg viewBox="0 0 44 44"><path d="M42 2C18 2 1 18 3 30c2 9 20 6 26-2 4-6-6-10-13-5" fill="none" stroke="#5aa0dc" stroke-width="4"/><path d="M4 35c8 9 26 8 33-8" fill="none" stroke="#66c184" stroke-width="4"/></svg>
  <div><b>极光下载站</b><span>www.xz7.com</span></div>
</div>
</body>
</html>
```
FILE: styles.css
```css
*{box-sizing:border-box}
html,body{margin:0;padding:0}
body{width:1920px;height:1039px;overflow:hidden;background:#ebebeb;position:relative;font:12px/1.2 "Noto Sans CJK SC","Noto Sans",sans-serif;color:#1b1b1b}
i{font-style:normal;display:block;flex:none}
svg{display:block;flex:none}
.defs{position:absolute;width:0;height:0}
.m2{margin-left:2px}.m3{margin-left:3px}.m4{margin-left:4px}.m5{margin-left:5px}.m6{margin-left:6px}.m7{margin-left:7px}.m8{margin-left:8px}.m12{margin-left:12px}.m13{margin-left:13px}
.qm{font-family:"Liberation Sans",sans-serif;line-height:1}
.ar{width:0;height:0;border-left:3.5px solid transparent;border-right:3.5px solid transparent;border-top:4px solid #555}
.ar.lt{border-top-color:#b5b5b5}
.cn{display:inline-block;width:0;height:0;border-left:5px solid transparent;border-bottom:5px solid #444}
.i18{width:18px;height:22px}.i20{width:20px;height:22px}.i21{width:21px;height:22px}.i22{width:22px;height:22px}.i23{width:23px;height:23px}.i25{width:25px;height:23px}

/* title bar */
.titlebar{height:34px;background:#22252e;color:#eee;display:flex;align-items:center;position:relative;padding-right:10px}
.logo{width:24px;height:24px;margin-left:5px}
.apptitle{margin-left:8px;font-size:14px;color:#e8e8e8}
.vip{margin-left:auto;width:59px;height:20px;border-radius:2px;background:linear-gradient(#f9d25d,#f6bc37);color:#96702a;font-size:12px;line-height:20px;text-align:center;flex:none}
.tb-ic{width:14px;height:16px}
.tb-t{font-size:12px;color:#eee;white-space:nowrap}
.a1{margin-left:19px}.t1{margin-left:8px}
.a2{margin-left:17px}.t2{margin-left:7px}
.a3{margin-left:24px}.t3{margin-left:7px}
.winb{width:14px;height:14px}
.w1{margin-left:31px}.w2{margin-left:15px}.w3{margin-left:15px}

/* menu */
.menubar{height:31px;margin-left:6px;padding:0 0 1px 9px;background:#f7f7f7;border-bottom:1px solid #d9d9d9;display:flex;align-items:center;gap:18px;white-space:nowrap;position:relative}

/* ribbon */
.ribbon{height:87px;margin-left:6px;padding-top:1px;background:#f7f7f7;border-bottom:1px solid #d9d9d9;display:flex;position:relative}
.sep{width:1px;height:82px;margin-top:1px;background:#dcdcdc}
.c{display:flex;flex-direction:column;flex:none}
.r{display:flex;align-items:center;height:28px;gap:4px;white-space:nowrap}
.r .ar{margin-left:2px}
.r .cn{align-self:flex-end;margin:0 0 6px -2px}
.r.dim{color:#9c9c9c}
.big{display:flex;flex-direction:column;align-items:center;flex:none;padding-top:2px;position:relative;white-space:nowrap}
.bi{height:46px}
.lb{margin-top:4px;line-height:18px}
.big .ar{margin-top:3px}
.lb .cn{margin-left:1px}
.open{width:56px;margin-right:2px}.folder{width:46px;height:36px;margin:7px 0 3px}
.save{width:79px;margin-left:6px}
.scan{width:70px}.scan .r{gap:2px}.scan .ar{margin-left:5px}
.undo{width:84px}.undo .ar{margin-left:6px}
.back{width:81px}
.hand{width:50px}.h-ic{width:36px;height:48px;margin-bottom:-2px}
.sel{width:48px;margin-left:2px}.s-ic{width:48px}
.nt{width:72px;margin-left:4px}.n-ic{width:48px}
.snap{width:81px;margin-left:5px}
.actual{width:49px}.a-ic{width:34px;height:44px;margin:1px 0 1px}
.one{position:absolute;top:15px;left:0;right:0;text-align:center;color:#45a4f2;font:18px/18px "Liberation Sans",sans-serif}
.match{width:77px;margin-left:6px}.match .r{gap:6px}
.zoomc{width:85px}
.ztool{width:94px}
.edit{width:48px}.e-ic{width:47px}
.add{width:47px;margin-left:4px}.add-ic{width:47px}
.form{width:48px;margin-left:6px}.f-ic{width:47px}
.type{width:74px;margin-left:7px}
.hl{width:74px;margin-left:5px}
.stick{width:90px;margin-left:1px}
.stick .r{padding-left:4px}
.stick .r.on{width:86px;height:28px;border:1px solid #b59c5e;border-radius:2px;background:linear-gradient(#fdf1c8,#fcd98c);padding-left:3px}
.stick .r.on .cn{margin-right:-2px}
.line{width:44px;margin-left:6px}.l-ic{width:44px}
.arrow{width:73px;margin-left:7px}
.poly{width:73px}
.stamp{width:45px;margin-left:7px}.st-ic{width:45px}
.stamp + .sep{margin-left:7px}
.pen{width:66px;margin-left:5px}
.dist{width:80px}
.scrollmk{width:7px;height:6px;position:absolute;border-top:1px solid #444}
.scrollmk:after{content:"";position:absolute;left:0;top:1px;border-left:3.5px solid transparent;border-right:3.5px solid transparent;border-bottom:4px solid #888}
.rb0{right:8px;top:3px;z-index:3}
.rb{right:8px;top:3px}
.rb1{right:8px;top:3px}
.rb2{right:8px;top:22px}

/* toolbar */
.toolbar{height:31px;margin-left:6px;padding-left:3px;background:#f7f7f7;border-bottom:2px solid #6f6f6f;display:flex;align-items:center;white-space:nowrap;position:relative}
.swatch{width:22px;height:22px;background:#3f51ff;border:1px solid #8a93d8;border-radius:1px}
.tclip{width:11px;height:23px;margin-left:11px}
.tsep{width:1px;height:24px;background:#d0d0d0}
.s1{margin-left:6px}.s2{margin-left:4px}
.combo{display:flex;align-items:center;background:#fff;border:1px solid #b9b9b9;border-radius:3px;box-shadow:inset 0 0 0 1px #eee;flex:none}
.combo .ar{margin-left:auto}
.z1{width:81px;height:24px;padding:0 7px 0 4px;margin-top:-2px;font-size:12.500px}
.z2{width:73px;height:25px;margin-left:5px;padding:0 5px 0 2px}
.chk{width:16px;height:18px;background:repeating-conic-gradient(#111 0 25%,#fff 0 50%) 0 0/4px 4px}
.z2 span{margin-left:4px;font-size:12.500px}
.z3{width:80px;height:24px;padding:0 7px 0 4px;font-size:12.500px}
.btn-on{width:80px;height:28px;margin-left:3px;display:flex;align-items:center;gap:4px;padding-left:4px;background:linear-gradient(#fdf1c8,#fcd98c);border:1px solid #b59c5e;border-radius:2px;flex:none}
.tool{display:flex;align-items:center;gap:3px;flex:none}
.solo{margin-left:3px}.prop{margin-left:7px;gap:4px}

/* main */
.main{display:flex;height:850px}
.leftcol{width:1608px;margin-left:5px;flex:none;display:flex;flex-direction:column}
.tabs{height:25px;background:linear-gradient(#737373,#5f5f5f);display:flex;position:relative;border-top:1px solid #444}
.tab{width:73px;background:linear-gradient(#fdf3cf,#fbd77e);display:flex;align-items:center;padding-left:6px;position:relative}
.x{position:absolute;font-weight:normal;font-size:11px;line-height:12px;color:#333}
.tab .x{left:61px;top:1px}
.newtab{width:19px;background:#5e5e5e;border-right:1px solid #444;display:flex;align-items:center;justify-content:center}
.newtab svg{width:11px;height:11px}
.tabclose{position:absolute;right:3px;top:3px;width:15px;height:17px;background:#404040;color:#fff;font-size:16px;line-height:16px;text-align:center;font-weight:bold}
.docarea{height:825px;display:flex;background:#8b8b8b;border-left:4px solid #fbdf98;border-bottom:1px solid #fbdf98;padding-top:4px}
.bookmarks{width:198px;height:817px;background:#f4f4f4;border:1px solid #c6c6c6;border-radius:3px 3px 0 0;flex:none;position:relative;display:flex;flex-direction:column;padding:0 2px}
.phead{height:23px;display:flex;align-items:center;background:linear-gradient(#f2f2f2,#e4e4e4);font-size:12px;position:relative;flex:none;margin:0 -2px;padding-left:4px}
.phead .x{right:3px;top:3px}
.ptools{height:31px;background:#f7f7f7;border:1px solid #dadada;border-bottom:2px solid #bdbdbd;display:flex;align-items:center;padding-left:1px;position:relative;flex:none}
.psep{width:1px;height:24px;background:#d8d8d8}
.ptools .ar{margin-left:6px}
.chev{width:10px;height:12px;margin-left:3px}
.rb3{right:3px;bottom:1px}
.tree{flex:1;background:#fff;border:1px solid #dadada;border-top:0;position:relative}
.node{height:30px;display:flex;align-items:center;position:relative;white-space:nowrap}
.node span{margin-left:8px}
.bmk{width:14px;height:20px}
.l1{margin-left:10px;padding-left:7px;width:102px}
.l2{margin-left:25px;padding-left:8px;width:117px}
.focus{height:28px;margin-top:1px;margin-bottom:1px;border:1px solid #fbd98a;border-radius:2px;padding-left:6px}
.cur{background:linear-gradient(#f6f6f6,#e6e6e6);border:1px solid #c6c6c6;border-radius:3px;padding-left:7px}
.tw{position:absolute;left:-9px;top:9px;width:0;height:0;border-left:5px solid transparent;border-bottom:5px solid #222}
.ghost{position:absolute;left:144px;top:705px;width:29px;height:43px}
.gutter{width:6px;flex:none;position:relative}
.grip{position:absolute;left:1px;top:370px;width:4px;height:50px;background:#f2f2f2;border-radius:2px}
.viewer{width:1400px;height:819px;margin-top:1px;flex:none;border:solid #fbdf98;border-width:3px 4px 4px;display:flex;flex-direction:column;background:#adadad}
.canvas{height:781px;padding:2px 1px 0 0;display:flex;justify-content:center;box-shadow:inset 3px 3px 5px rgba(0,0,0,.3)}
.page{width:598px;height:774px;padding:24px;background:#ffd800;border:1px solid #222;box-shadow:3px 3px 7px rgba(0,0,0,.55);flex:none}
.sheet{height:725px;background:#fff;padding:28px 0 0 70px;white-space:nowrap;color:#666;font-size:11.700px;line-height:20.500px}
.pclip{width:12px;height:24px;margin-left:182px}
.sheet h1{margin:18px 0 0;font-size:10.700px;line-height:15px;font-weight:bold;color:#111}
.meta{width:408px;margin-top:10px;display:grid;grid-template-columns:58px 145px 57px 148px;grid-auto-rows:14.500px;padding:0 0 2px 2px;border-bottom:1px solid #aaa;color:#222;font-size:8.600px;line-height:14.500px;align-items:center}
.sheet p{margin:0 0 12.450px}
.meta + p{margin-top:3px}
.ind{text-indent:25.500px}
.status{height:31px;background:#f7f7f7;display:flex;align-items:center;white-space:nowrap;position:relative}
.st-left{width:559px;display:flex;align-items:center;flex:none}
.st-left .psep{height:22px}
.dim-ic{width:16px;height:22px;margin-left:5px}
.wh,.xy{display:flex;flex-direction:column;font:11.500px/13px "Liberation Sans",sans-serif;letter-spacing:.3px}
.wh{margin-left:1px;width:66px}
.cross{width:16px;height:20px;margin-left:4px}
.xy{margin-left:2px}
.st-nav{display:flex;align-items:center;flex:none;width:420px}
.navb{width:22px;height:22px}
.pageno{width:91px;height:24px;background:#fff;border:1px solid #c6c6c6;border-radius:3px;text-align:right;padding-right:4px;line-height:22px}
.st-view{display:flex;align-items:center;flex:none;position:relative}
.pg1{width:16px;height:22px}
.pgbtn{width:28px;height:27px;background:linear-gradient(#fdf1c8,#fcd98c);border:1px solid #b59c5e;border-radius:2px;display:flex;align-items:center;justify-content:center}
.pgbtn svg{width:16px;height:22px}
.pg2{width:24px;height:24px}
.slider{width:100px;height:22px;position:relative;background:linear-gradient(#777,#777) 0 50%/100% 1px no-repeat}
.tick{position:absolute;left:50px;top:9px;width:1px;height:5px;background:#555}
.thumb{position:absolute;left:33px;top:0;width:6px;height:22px;background:#fff;border:1px solid #777;border-radius:2px}
.screen{width:16px;height:13px}
.rb4{right:-19px;top:-2px}

/* right column */
.gutter2{width:9px;background:#8b8b8b;flex:none;position:relative}
.gutter2 .grip{top:395px;left:2px;height:62px;width:5px}
.search{width:291px;background:#f0f0f0;border:1px solid #c6c6c6;border-top:0;margin-top:2px;display:flex;flex-direction:column;position:relative;flex:none}
.search .phead{margin:0;height:25px;padding-left:4px}
.search .phead .x{right:2px;top:3px}
.sbody{flex:1;background:#f6f6f6;margin:0 2px 4px;border:1px solid #cfcfcf;padding:7px 4px 0;display:flex;flex-direction:column}
.q{line-height:16px;padding-left:1px}
.q2{margin-top:4px}
.srow{display:flex;align-items:center;height:24px}
.adv{height:27px;gap:5px}
.radio{width:15px;height:15px;border-radius:50%;border:1px solid #8f8f8f;background:#fdfdfd;box-shadow:inset 0 0 0 2px #e4e4e4;margin-left:1px}
.on1{background:radial-gradient(circle,#123f91 0 4px,#fdfdfd 4.500px)}
.field{display:flex;align-items:center;background:#fff;border:1px solid #bcbcbc;border-radius:3px;padding:0 6px 0 3px}
.field .ar{margin-left:auto}
.fl1{width:251px;height:24px;margin-left:8px;color:#aaa}
.fl2{width:275px;height:24px;margin-top:3px}
.btns{display:flex;justify-content:space-between;margin-top:4px;width:274px}
.sbtn{height:28px;background:#fff;border:1px solid #c6c6c6;border-radius:3px;display:flex;align-items:center;justify-content:center}
.b1{width:103px}.b2{width:89px;padding:0 7px 0 12px;justify-content:space-between}
.rule{width:286px;margin:10px -4px 0;border:0;border-top:1px solid #c2c2c2}
.progress{height:8px;width:273px;margin:11px 0 0 1px;background:#e9e9e9;border:1px solid #a7a7a7;border-radius:2px}
.found{display:flex;flex-direction:column;margin:5px 0 0 27px;line-height:14px}
.found em{font-style:normal;color:#777}
.results{width:277px;flex:1;margin:2px 0 5px;background:#fff;border:1px solid #c6c6c6;border-radius:3px}

/* overlays */
.upload{position:absolute;left:1712px;top:32px;width:127px;height:32px;display:flex;border:1px solid #1e9bf5;border-radius:10px;overflow:hidden;z-index:3}
.up-l{width:36px;background:#0e93fb;display:flex;align-items:center;justify-content:center}
.up-l svg{width:22px;height:20px}
.up-r{flex:1;background:#edf8ff;color:#1e9bf5;font-size:12.500px;line-height:30px;text-align:center}
.advbtn{position:absolute;left:1839px;top:36px;width:63px;height:26px;background:linear-gradient(#fdf1c8,#fcd98c);border:1px solid #b59c5e;border-radius:2px;line-height:24px;white-space:nowrap;overflow:hidden;z-index:2;text-align:right;padding-right:2px}
.popup{position:absolute;left:1592px;top:813px;width:298px;height:168px;background:linear-gradient(#fde8cb,#fdc98a);border:1px solid #f4c27d;border-radius:2px;color:#111;z-index:4;overflow:hidden}
.deco{position:absolute;left:0;top:0;width:298px;height:168px}
.ptitle{position:absolute;left:10px;top:9px;font-size:12px}
.pbody{position:absolute;left:30px;top:49px;display:flex}
.shield{width:63px;height:56px}
.viptxt{font:9px "Liberation Sans",sans-serif;fill:#b98c5c;text-anchor:middle}
.ptext{display:flex;flex-direction:column;margin:0 0 0 1px;font-size:13.800px;line-height:27.500px;white-space:nowrap}
.pbtn{position:absolute;left:64px;top:121px;width:168px;height:33px;background:linear-gradient(#4a4a4a,#262626);box-shadow:0 4px 10px rgba(160,90,20,.45);color:#fcd79b;font-size:14px;line-height:33px;text-align:center}
.ime{position:absolute;display:flex;align-items:center;background:#fff;border:1px solid #bfd3ec;color:#0d6fd6;z-index:5}
.ime-z{font-size:15px;font-weight:bold;line-height:1}
.ime-p{font:bold 14px/1 "Liberation Sans",sans-serif;letter-spacing:1px}
.ime-i{width:15px;height:15px}
.sogou{left:1790px;top:738px;width:127px;height:25px;padding-left:10px;gap:9px}
.slogo{position:absolute;left:1765px;top:736px;width:27px;height:26px;background:#f25a1d;border-radius:4px;transform:rotate(-14deg);color:#fff;font:italic bold 24px/26px "Liberation Sans",sans-serif;text-align:center;z-index:6}
.ifly{left:1784px;top:920px;width:136px;height:28px;padding-left:4px;gap:12px;color:#4a7df2;border-right:0}
.fly{width:23px;height:23px;border-radius:50%;border:2.500px solid #4a7df2;font:bold 6px/18px "Liberation Sans",sans-serif;text-align:center}
.ifly .ime-z{font-size:17px}
.sidewidget{position:absolute;left:1911px;top:855px;width:9px;height:57px;background:linear-gradient(#333,#586068);border-radius:3px 0 0 3px;z-index:3}
.winmark{position:absolute;left:1631px;top:943px;display:flex;flex-direction:column;color:rgba(90,90,90,.5);white-space:nowrap;z-index:7}
.w-a{font-size:20px;line-height:28px}
.w-b{font-size:14px;line-height:20px}
.sitemark{position:absolute;left:1758px;top:988px;display:flex;gap:4px;z-index:7;white-space:nowrap}
.sitemark svg{width:42px;height:42px}
.sitemark div{display:flex;flex-direction:column}
.sitemark b{font-size:21px;line-height:26px;color:#4f9dd8}
.sitemark span{font:bold 16.500px/22px "Liberation Sans",sans-serif;color:#69c186}
```
